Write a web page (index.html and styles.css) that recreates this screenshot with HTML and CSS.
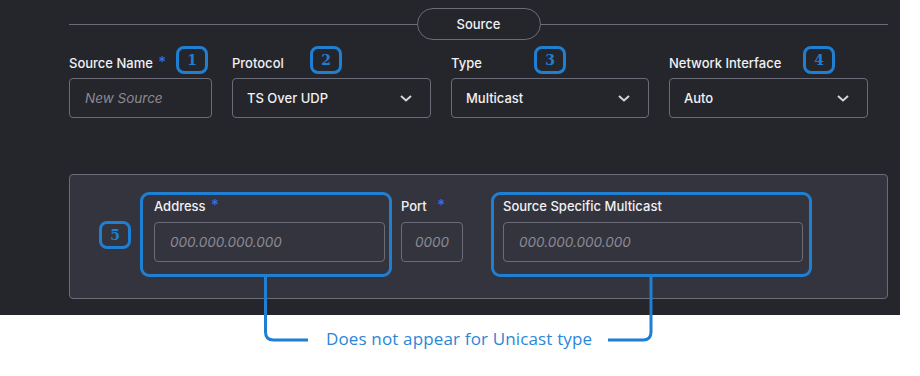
FILE: index.html
```html
<!DOCTYPE html>
<html lang="en">
<head>
    <title>Source settings</title>
    <meta charset="UTF-8">
    <meta name="viewport" content="width=device-width, initial-scale=1.0">
    <link rel="stylesheet" href="styles.css">
</head>
<body>
    <div class="figure">
        <div class="screen">
            <div class="section-head">
                <span class="rule"></span>
                <span class="pill">Source</span>
                <span class="rule"></span>
            </div>

            <div class="fields">
                <div class="field f-name">
                    <div class="label">Source Name <span class="req">*</span></div>
                    <input class="input" type="text" placeholder="New Source">
                    <span class="badge b1">1</span>
                </div>
                <div class="field f-wide">
                    <div class="label">Protocol</div>
                    <div class="select">
                        <span>TS Over UDP</span>
                        <svg class="chev" viewBox="0 0 12 7"><path d="M1 1l5 4.5L11 1"></path></svg>
                    </div>
                    <span class="badge b2">2</span>
                </div>
                <div class="field f-type">
                    <div class="label">Type</div>
                    <div class="select">
                        <span>Multicast</span>
                        <svg class="chev" viewBox="0 0 12 7"><path d="M1 1l5 4.5L11 1"></path></svg>
                    </div>
                    <span class="badge b3">3</span>
                </div>
                <div class="field f-wide">
                    <div class="label">Network Interface</div>
                    <div class="select">
                        <span>Auto</span>
                        <svg class="chev" viewBox="0 0 12 7"><path d="M1 1l5 4.5L11 1"></path></svg>
                    </div>
                    <span class="badge b4">4</span>
                </div>
            </div>

            <div class="panel">
                <span class="badge b5">5</span>
                <div class="field f-addr">
                    <span class="hl"></span>
                    <div class="label">Address <span class="req">*</span></div>
                    <input class="input" type="text" placeholder="000.000.000.000">
                </div>
                <div class="field f-port">
                    <div class="label">Port <span class="req req-port">*</span></div>
                    <input class="input input-port" type="text" placeholder="0000">
                </div>
                <div class="field f-ssm">
                    <span class="hl hl-ssm"></span>
                    <div class="label">Source Specific Multicast</div>
                    <input class="input" type="text" placeholder="000.000.000.000">
                </div>
            </div>
        </div>

        <div class="note">
            <span class="note-text">Does not appear for Unicast type</span>
        </div>

        <!-- callout brackets joining the two boxes to the note -->
        <svg class="connectors" viewBox="0 0 920 376">
            <path d="M265.5 277V332q0 8 8 8H308"></path>
            <path d="M608 340H643q8 0 8-8V277"></path>
        </svg>
    </div>
</body>
</html>
```

FILE: styles.css
```css
:root {
    --bg: #25262b;
    --panel: #34343e;
    --line: #6c6b78;
    --text: #f1f1f3;
    --muted: #8b8a94;
    --callout: #1f7fd2;
    --req: #2f6ff2;
}

* {
    margin: 0;
    padding: 0;
    box-sizing: border-box;
}

body {
    background: #fff;
    font-family: Inter, "Open Sans", sans-serif;
}

.figure {
    position: relative;
    width: 920px;
    height: 376px;
}

.screen {
    width: 900px;
    height: 315px;
    background: var(--bg);
    padding: 8px 12px 0 69px;
    color: var(--text);
}

/* section title */
.section-head {
    display: flex;
    align-items: center;
}

.rule {
    flex: 1;
    height: 1px;
    background: var(--line);
}

.pill {
    width: 124px;
    height: 32px;
    border: 1px solid var(--line);
    border-radius: 16px;
    display: flex;
    align-items: center;
    justify-content: center;
    font-size: 13px;
    font-weight: 500;
}

/* fields */
.fields {
    display: flex;
    gap: 20px;
    margin-top: 15px;
}

.field {
    position: relative;
}

.f-name { width: 143px; }
.f-wide { width: 199px; }
.f-type { width: 198px; }

.label {
    font-size: 13px;
    font-weight: 500;
    line-height: 16px;
    margin-bottom: 7px;
    white-space: nowrap;
}

.req {
    color: var(--req);
    font-size: 15px;
    margin-left: 2px;
    vertical-align: top;
    line-height: 14px;
}

.req-port {
    margin-left: 7px;
}

.input,
.select {
    width: 100%;
    height: 40px;
    border: 1px solid var(--line);
    border-radius: 4px;
    background: transparent;
    color: var(--text);
    font-family: inherit;
    font-size: 13.5px;
    outline: none;
}

.input {
    padding: 0 15px;
}

.input-port {
    padding: 0;
    text-align: center;
}

.input::placeholder {
    color: var(--muted);
    font-style: italic;
}

.select {
    display: flex;
    align-items: center;
    justify-content: space-between;
    padding: 0 18px 0 14px;
    font-size: 13px;
    font-weight: 500;
}

.chev {
    width: 12px;
    height: 7px;
    fill: none;
    stroke: #d6d6da;
    stroke-width: 2;
}

/* numbered callouts */
.badge {
    position: absolute;
    top: -9px;
    width: 32px;
    height: 28px;
    border: 3px solid var(--callout);
    border-radius: 8px;
    display: flex;
    align-items: center;
    justify-content: center;
    color: var(--callout);
    font-family: "DejaVu Serif", serif;
    font-weight: bold;
    font-size: 14px;
    background: var(--bg);
}

.b1 { left: 107px; }
.b2 { left: 78px; }
.b3 { left: 83px; }
.b4 { left: 134px; }

.b5 {
    left: 29px;
    top: 46px;
    background: var(--panel);
}

/* multicast panel */
.panel {
    position: relative;
    display: flex;
    align-items: flex-start;
    margin-top: 56px;
    height: 125px;
    padding: 23px 0 0 84px;
    background: var(--panel);
    border: 1px solid var(--line);
    border-radius: 4px;
}

.panel .label {
    margin-bottom: 8px;
}

.f-addr { width: 231px; }
.f-port { width: 62px; margin-left: 16px; }
.f-ssm { width: 300px; margin-left: 40px; }

.hl {
    position: absolute;
    top: -6px;
    left: -14px;
    right: -7px;
    bottom: -15px;
    border: 3px solid var(--callout);
    border-radius: 9px;
}

.hl-ssm {
    left: -12px;
    right: -9px;
}

/* note under the screen */
.note {
    padding: 13px 0 0 326px;
}

.note-text {
    color: #2b86d8;
    font-family: "Open Sans", sans-serif;
    font-size: 17px;
    letter-spacing: 0.15px;
    line-height: 22px;
}

.connectors {
    position: absolute;
    left: 0;
    top: 0;
    width: 920px;
    height: 376px;
    pointer-events: none;
    fill: none;
    stroke: var(--callout);
    stroke-width: 3;
}
```
